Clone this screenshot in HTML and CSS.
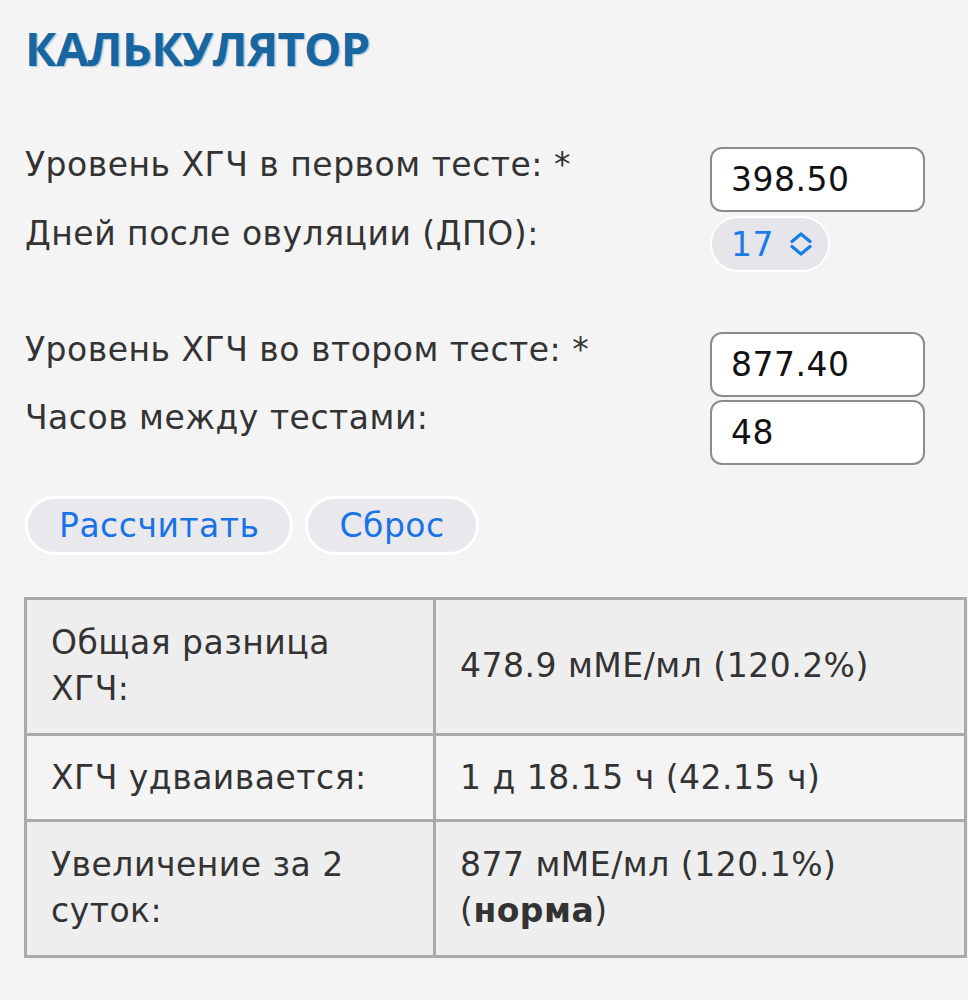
FILE: index.html
```html
<!DOCTYPE html>
<html lang="ru">
<head>
<meta charset="utf-8">
<title>Калькулятор ХГЧ</title>
<link rel="stylesheet" href="styles.css">
</head>
<body>
<div class="page">
  <h1 class="title">КАЛЬКУЛЯТОР</h1>

  <div class="group group-first">
    <div class="row">
      <label class="label">Уровень ХГЧ в первом тесте: *</label>
      <input class="field" type="text" value="398.50">
    </div>
    <div class="row">
      <label class="label">Дней после овуляции (ДПО):</label>
      <div class="select-wrap">
        <span class="select">17
          <svg class="chev" viewBox="0 0 24 26" width="24" height="26"><path d="M3 10.5 L12 3 L21 10.5 M3 15.5 L12 23 L21 15.5" fill="none" stroke="currentColor" stroke-width="3.2" stroke-linecap="round" stroke-linejoin="round"/></svg>
        </span>
      </div>
    </div>
  </div>

  <div class="group group-second">
    <div class="row">
      <label class="label">Уровень ХГЧ во втором тесте: *</label>
      <input class="field" type="text" value="877.40">
    </div>
    <div class="row">
      <label class="label">Часов между тестами:</label>
      <input class="field" type="text" value="48">
    </div>
  </div>

  <div class="buttons">
    <button class="btn btn-calc" type="button">Рассчитать</button>
    <button class="btn btn-reset" type="button">Сброс</button>
  </div>

  <table class="results">
    <tr class="r-odd">
      <td class="c-label">Общая разница ХГЧ:</td>
      <td class="c-value">478.9 мМЕ/мл (120.2%)</td>
    </tr>
    <tr class="r-even">
      <td class="c-label">ХГЧ удваивается:</td>
      <td class="c-value">1 д 18.15 ч (42.15 ч)</td>
    </tr>
    <tr class="r-odd">
      <td class="c-label">Увеличение за 2 суток:</td>
      <td class="c-value">877 мМЕ/мл (120.1%) <span class="verdict">(<b>норма</b>)</span></td>
    </tr>
  </table>
</div>
</body>
</html>
```

FILE: styles.css
```css
html, body {
  margin: 0;
  padding: 0;
  background: #f4f4f4;
}

.page {
  font-family: "DejaVu Sans", Verdana, sans-serif;
  color: #333;
  font-size: 33px;
  letter-spacing: 0.5px;
  padding: 0 0 0 25px;
}

.title {
  margin: 0;
  padding-top: 18px;
  font-family: "Open Sans", "Noto Sans", sans-serif;
  font-weight: 700;
  font-size: 47px;
  line-height: 60px;
  letter-spacing: -0.7px;
  color: #17669f;
  text-shadow: 1.5px 1px 1px rgba(40, 110, 170, 0.35);
}

.group {
  display: flex;
  flex-direction: column;
  gap: 4px;
  width: 900px;
}

.group-first {
  margin-top: 69px;
}

.group-second {
  margin-top: 60px;
  gap: 3px;
}

.row {
  display: flex;
  justify-content: space-between;
  align-items: flex-start;
}

.label {
  line-height: 36px;
  white-space: nowrap;
}

.field {
  box-sizing: border-box;
  width: 215px;
  height: 65px;
  margin: 0;
  border: 2px solid #8c8c8c;
  border-radius: 12px;
  background: #fff;
  padding: 0 0 0 19px;
  font-family: "DejaVu Sans", Verdana, sans-serif;
  font-size: 33px;
  letter-spacing: 0.5px;
  color: #111;
  outline: none;
}

.select-wrap {
  width: 215px;
}

.select {
  box-sizing: border-box;
  display: inline-flex;
  align-items: center;
  gap: 15px;
  width: 120px;
  height: 56px;
  padding: 0 0 0 19px;
  border: 2px solid #fff;
  border-radius: 28px;
  background: #e6e6ea;
  color: #1a7ae6;
  font-size: 33px;
}

.chev {
  display: block;
}

.buttons {
  display: flex;
  gap: 12px;
  margin-top: 31px;
}

.btn {
  box-sizing: border-box;
  height: 59px;
  padding: 0 31px;
  border: 3px solid #fff;
  border-radius: 30px;
  background: #e9e9ed;
  color: #1a73e6;
  font-family: "DejaVu Sans", Verdana, sans-serif;
  font-size: 33px;
  letter-spacing: 0.5px;
  cursor: pointer;
}

.results {
  margin-top: 42px;
  margin-left: -1px;
  width: 943px;
  border-collapse: collapse;
  border: 3px solid #aaa;
}

.results td {
  border: 3px solid #aaa;
  padding: 20px 24px 21px;
  line-height: 46px;
  vertical-align: middle;
  color: #333;
}

.c-label {
  width: 358px;
}

.r-odd td {
  background: #eeeeee;
}

.r-even td {
  background: #f4f4f4;
  padding-top: 19px;
  padding-bottom: 18px;
}

.verdict {
  white-space: nowrap;
}

.results b {
  font-weight: 700;
}
```
